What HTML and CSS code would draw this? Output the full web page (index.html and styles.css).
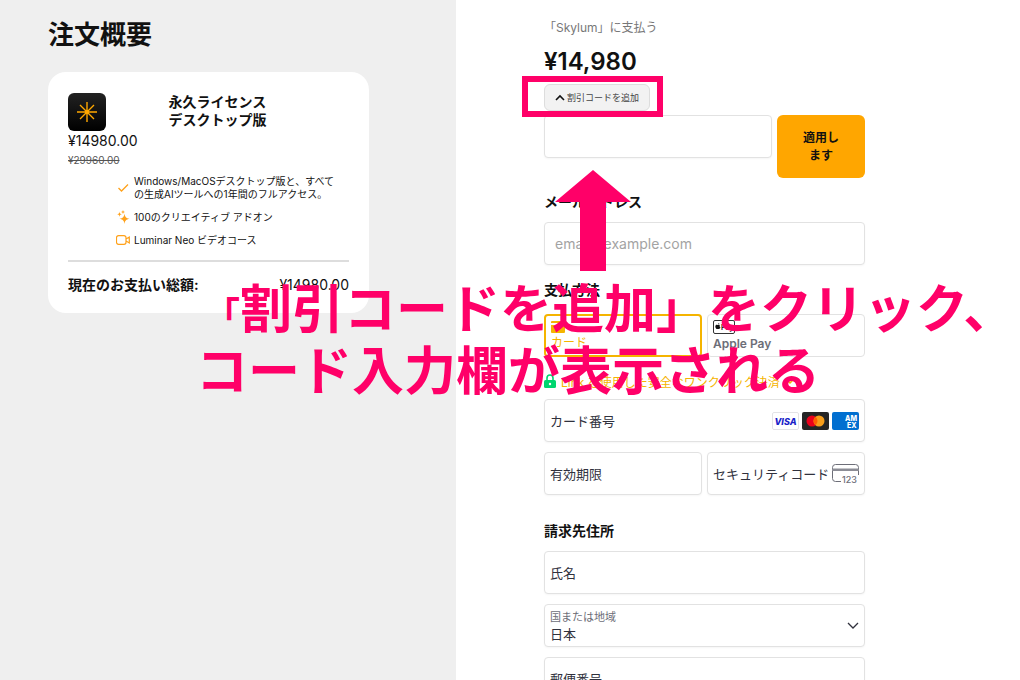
FILE: index.html
```html
<!DOCTYPE html>
<html lang="ja">
<head>
    <meta charset="UTF-8">
    <meta name="viewport" content="width=device-width, initial-scale=1.0">
    <title>Skylum - お支払い</title>
    <link rel="stylesheet" href="styles.css">
</head>
<body>
    <div class="checkout">
        <aside class="summary">
            <h1>注文概要</h1>
            <div class="summary-card">
                <div class="product">
                    <div class="product-price">
                        <svg class="product-logo" viewBox="0 0 38 38" aria-hidden="true">
                            <defs>
                                <linearGradient id="logo-bg" x1="0" y1="0" x2="0" y2="1">
                                    <stop offset="0" stop-color="#222"/>
                                    <stop offset="1" stop-color="#000"/>
                                </linearGradient>
                            </defs>
                            <rect width="38" height="38" rx="6" fill="url(#logo-bg)"/>
                            <path d="M19 9v20M9 19h20M12 12l14 14M26 12L12 26" stroke="#ffa800" stroke-width="1.4"/>
                            <circle cx="19" cy="19" r="2" fill="#ffa800"/>
                        </svg>
                        <span class="price">¥14980.00</span>
                        <s class="old-price">¥29960.00</s>
                    </div>
                    <h2>永久ライセンス<br>デスクトップ版</h2>
                </div>
                <ul class="features">
                    <li>
                        <svg viewBox="0 0 14 14" aria-hidden="true"><path d="M2.500 7l3 3 6.500-6.500" fill="none" stroke="#ffa11a" stroke-width="1.300"/></svg>
                        <span>Windows/MacOSデスクトップ版と、すべて<br>の生成AIツールへの1年間のフルアクセス。</span>
                    </li>
                    <li>
                        <svg viewBox="0 0 14 14" aria-hidden="true">
                            <path d="M8.500 3.500C9 7 10 8 13.500 8.800C10 9.600 9 10.600 8.500 14C8 10.600 7 9.600 3.500 8.800C7 8 8 7 8.500 3.500z" fill="#ffa11a"/>
                            <path d="M3.500 1.500C3.700 3.500 4.200 4 6 4.300C4.200 4.600 3.700 5.100 3.500 7C3.300 5.100 2.800 4.600 1 4.300C2.800 4 3.300 3.500 3.500 1.500zM7 0l.6 1.400L9 2l-1.400.6L7 4l-.6-1.400L5 2l1.400-.6z" fill="#ffa11a"/>
                        </svg>
                        <span>100のクリエイティブ アドオン</span>
                    </li>
                    <li>
                        <svg viewBox="0 0 14 14" aria-hidden="true"><path d="M2.500 2.700h5.500a2 2 0 0 1 2 2v4.600a2 2 0 0 1-2 2H2.500a2 2 0 0 1-2-2V4.700a2 2 0 0 1 2-2zM10 6l3.300-2v6L10 8z" fill="none" stroke="#ffa11a" stroke-width="1.200"/></svg>
                        <span>Luminar Neo ビデオコース</span>
                    </li>
                </ul>
                <div class="total">
                    <strong>現在のお支払い総額:</strong>
                    <span>¥14980.00</span>
                </div>
            </div>
        </aside>

        <main class="payment">
            <p class="merchant">「Skylum」に支払う</p>
            <p class="amount">¥14,980</p>
            <button type="button" class="promo-toggle">
                <svg viewBox="0 0 10 8" aria-hidden="true"><path d="M1 6l4-4 4 4" fill="none" stroke="#111" stroke-width="1.600"/></svg>
                割引コードを追加
            </button>

            <form class="payment-form">
                <div class="promo">
                    <input type="text" class="box" name="promo" aria-label="割引コード">
                    <button type="button" class="apply">適用し<br>ます</button>
                </div>

                <label class="section-title email-title" for="email">メールアドレス</label>
                <input type="email" class="box" id="email" name="email" placeholder="email@example.com">

                <h3 class="section-title method-title">支払方法</h3>
                <div class="two-columns methods">
                    <button type="button" class="method selected">
                        <svg viewBox="0 0 14 12" aria-hidden="true"><path d="M1 0h12a1 1 0 0 1 1 1v1H0V1a1 1 0 0 1 1-1zM0 4h14v7a1 1 0 0 1-1 1H1a1 1 0 0 1-1-1z" fill="#f5b400"/></svg>
                        カード
                    </button>
                    <button type="button" class="method">
                        <svg class="apple-pay" viewBox="0 0 22 14" aria-hidden="true">
                            <rect x=".5" y=".5" width="21" height="13" rx="1.500" fill="#fff" stroke="#333"/>
                            <path d="M5.500 5c.6 0 1-.4 1.700-.2-.9.700-.8 2 .2 2.500-.4 1.100-1 1.800-1.500 1.800-.5 0-.7-.2-1.100-.2s-.6.2-1 .2C3 9.100 2.300 7.500 2.300 6.600c0-1.300.8-1.900 1.600-1.900.7 0 1 .3 1.600.3zM5 4.500c0-.8.600-1.400 1.300-1.500 0 .8-.6 1.500-1.300 1.500z" fill="#111"/>
                            <text x="8" y="9.500" class="pay-text">Pay</text>
                        </svg>
                        Apple Pay
                    </button>
                </div>

                <a href="#" class="link-pay">
                    <svg viewBox="0 0 12 14" aria-hidden="true"><path d="M3 6V4a3 3 0 0 1 6 0v2" fill="none" stroke="#00d66f" stroke-width="1.600"/><rect y="6" width="12" height="8" rx="1.500" fill="#00d66f"/><circle cx="6" cy="10" r="1.200" fill="#fff"/></svg>
                    <span>Link を使用した安全なワンクリック決済</span>
                    <svg class="link-arrow" viewBox="0 0 10 8" aria-hidden="true"><path d="M1 2l4 4 4-4" fill="none" stroke="#f5b400" stroke-width="1.500"/></svg>
                </a>

                <div class="box field">
                    <label for="card-number">カード番号</label>
                    <input type="text" id="card-number" name="card-number">
                    <span class="brands">
                        <svg viewBox="0 0 27 18" role="img" aria-label="Visa"><rect x=".5" y=".5" width="26" height="17" rx="1.500" fill="#fff" stroke="#e3e3e6"/><text x="13.500" y="12.500" class="visa-text">VISA</text></svg>
                        <svg viewBox="0 0 27 18" role="img" aria-label="Mastercard"><rect width="27" height="18" rx="2" fill="#252525"/><circle cx="10" cy="9" r="5.500" fill="#eb001b"/><circle cx="17" cy="9" r="5.500" fill="#f79e1b"/><path d="M13.500 4.760a5.500 5.500 0 0 1 0 8.480a5.500 5.500 0 0 1 0-8.480z" fill="#ff5f00"/></svg>
                        <svg viewBox="0 0 27 18" role="img" aria-label="American Express"><rect width="27" height="18" rx="2" fill="#016fd0"/><text x="13" y="9" class="amex-text">AM</text><text x="15" y="15.500" class="amex-text">EX</text></svg>
                    </span>
                </div>

                <div class="two-columns">
                    <div class="box field">
                        <label for="expiry">有効期限</label>
                        <input type="text" id="expiry" name="expiry">
                    </div>
                    <div class="box field">
                        <label for="cvc">セキュリティコード</label>
                        <input type="text" id="cvc" name="cvc">
                        <svg class="cvc-icon" viewBox="0 0 27 20" aria-hidden="true"><path d="M9 17.500H3.500a3 3 0 0 1-3-3v-11a3 3 0 0 1 3-3h20a3 3 0 0 1 3 3V11" fill="none" stroke="#6d6e78"/><path d="M0 4.500h27v2.500H0z" fill="#8b8c95"/><text x="10" y="19" class="cvc-text">123</text></svg>
                    </div>
                </div>

                <h3 class="section-title billing-title">請求先住所</h3>
                <div class="box field">
                    <label for="name">氏名</label>
                    <input type="text" id="name" name="name">
                </div>
                <div class="box field country">
                    <div class="country-select">
                        <label for="country">国または地域</label>
                        <select id="country" name="country">
                            <option>日本</option>
                        </select>
                    </div>
                    <svg viewBox="0 0 12 8" aria-hidden="true"><path d="M1 1l5 5 5-5" fill="none" stroke="#30313d" stroke-width="1.300"/></svg>
                </div>
                <div class="box field">
                    <label for="zip">郵便番号</label>
                    <input type="text" id="zip" name="zip">
                </div>
            </form>
        </main>

        <!-- tutorial annotations on top of the checkout -->
        <div class="highlight"></div>
        <svg class="arrow" viewBox="0 0 76 101" aria-hidden="true"><path d="M38 0l38 32H51v69H25V32H0z" fill="#ff0068"/></svg>
        <p class="caption"><span class="caption-first"><span class="bracket">「</span>割引コードを追加」をクリック、</span><span>コード入力欄が表示される</span></p>
    </div>
</body>
</html>
```

FILE: styles.css
```css
* {
    box-sizing: border-box;
}
body {
    margin: 0;
    font-family: Inter, "Noto Sans CJK JP", sans-serif;
    font-size: 14px;
    color: #111;
    background-color: #fff;
}
h1, h2, h3, p, ul {
    margin: 0;
    padding: 0;
}
button, input, select {
    font-family: inherit;
    color: inherit;
}
svg {
    display: block;
    flex-shrink: 0;
}
.checkout {
    position: relative;
    display: grid;
    grid-template-columns: minmax(0, 456fr) minmax(0, 564fr);
    height: 100vh;
    overflow: hidden;
}

/* order summary */
.summary {
    background-color: #efefef;
    padding: 16px 87px 16px 48px;
}
.summary h1 {
    font-size: 26px;
    line-height: 38px;
    margin-bottom: 18px;
}
.summary-card {
    background-color: #fff;
    border-radius: 18px;
    padding: 21px 20px 18px;
}
.product {
    display: flex;
    gap: 31px;
}
.product-price {
    display: flex;
    flex-direction: column;
}
.product-logo {
    width: 38px;
    height: 38px;
}
.price {
    line-height: 20px;
}
.old-price {
    font-size: 10px;
    line-height: 18px;
    color: #555;
}
.product h2 {
    font-size: 14px;
    line-height: 18px;
}
.features {
    display: grid;
    gap: 9px;
    list-style: none;
    margin-top: 6px;
    padding-left: 48px;
    font-size: 10px;
    line-height: 13px;
}
.features li {
    display: flex;
    align-items: center;
    gap: 4px;
    white-space: nowrap;
}
.features svg {
    width: 14px;
    height: 14px;
}
.total {
    display: flex;
    justify-content: space-between;
    align-items: center;
    margin-top: 13px;
    padding-top: 13px;
    border-top: 2px solid #ddd;
    line-height: 20px;
}

/* payment form */
.payment {
    padding: 18px 155px 16px 88px;
}
.merchant {
    font-size: 12px;
    line-height: 20px;
    color: #777;
}
.amount {
    font-size: 24px;
    font-weight: 600;
    line-height: 32px;
    margin-top: 8px;
}
.promo-toggle {
    display: flex;
    align-items: center;
    gap: 2px;
    height: 27px;
    margin-top: 6px;
    padding: 0 10px;
    border: 1px solid #ddd;
    border-radius: 6px;
    background-color: #f2f2f2;
    color: #444;
    font-size: 9px;
}
.promo-toggle svg {
    width: 10px;
    height: 8px;
}
.payment-form {
    display: flex;
    flex-direction: column;
    gap: 10px;
    margin-top: 4px;
}
.box {
    width: 100%;
    height: 43px;
    border: 1px solid #e2e2e2;
    border-radius: 4px;
    background-color: #fff;
    box-shadow: 0 1px 2px rgba(0, 0, 0, 0.04);
}
.promo {
    display: grid;
    grid-template-columns: 228fr 88fr;
    gap: 5px;
}
.apply {
    height: 63px;
    border: none;
    border-radius: 6px;
    background-color: #ffa600;
    font-size: 12px;
    font-weight: bold;
    line-height: 18px;
}
#email {
    padding: 0 10px;
    font-size: 14px;
}
#email::placeholder {
    color: #a3a3a3;
}
.section-title {
    font-size: 14px;
    font-weight: bold;
    line-height: 20px;
}
.email-title {
    margin-top: 4px;
}
.method-title {
    margin: 5px 0 4px;
}
.billing-title {
    margin-top: 16px;
}
.two-columns {
    display: grid;
    grid-template-columns: 1fr 1fr;
    gap: 5px;
}
.method {
    display: flex;
    flex-direction: column;
    align-items: flex-start;
    justify-content: center;
    gap: 2px;
    height: 43px;
    padding: 0 5px;
    border: 1px solid #e2e2e2;
    border-radius: 4px;
    background-color: #fff;
    color: #6d6e78;
    font-size: 12px;
    font-weight: 600;
    line-height: 16px;
}
.method svg {
    width: 14px;
    height: 12px;
}
.method .apple-pay {
    width: 22px;
    height: 14px;
}
.method.selected {
    border: 2px solid #f5b400;
    color: #f5b400;
    font-weight: normal;
}
.pay-text {
    font-size: 7px;
    fill: #111;
}
.link-pay {
    display: flex;
    align-items: center;
    gap: 5px;
    height: 22px;
    padding-top: 6px;
    color: #f5b400;
    font-size: 12px;
    text-decoration: none;
    white-space: nowrap;
}
.link-pay svg {
    width: 12px;
    height: 14px;
}
.link-pay .link-arrow {
    width: 10px;
    height: 8px;
}
.field {
    display: flex;
    align-items: center;
    padding: 0 5px;
    color: #30313d;
    font-size: 13px;
}
.field label {
    white-space: nowrap;
}
.field input {
    flex: 1;
    min-width: 0;
    width: 0;
    border: none;
    outline: none;
    padding: 0;
    background: none;
    font-size: 13px;
}
.brands {
    display: flex;
    gap: 3px;
}
.brands svg {
    width: 27px;
    height: 18px;
}
.visa-text {
    font-size: 9px;
    font-style: italic;
    font-weight: 800;
    text-anchor: middle;
    fill: #1a1fc8;
}
.amex-text {
    font-size: 7px;
    font-weight: 800;
    fill: #fff;
}
.cvc-icon {
    width: 27px;
    height: 20px;
}
.cvc-text {
    font-size: 9px;
    font-weight: 500;
    fill: #6d6e78;
}
.country {
    justify-content: space-between;
}
.country-select {
    display: flex;
    flex: 1;
    flex-direction: column;
}
.country-select label {
    color: #6d6e78;
    font-size: 11px;
    line-height: 16px;
}
.country-select select {
    appearance: none;
    border: none;
    outline: none;
    padding: 0;
    background: none;
    font-size: 13px;
    line-height: 18px;
}
.country svg {
    width: 12px;
    height: 8px;
}

/* annotations */
.highlight {
    position: absolute;
    left: 522px;
    top: 76px;
    width: 141px;
    height: 41px;
    border: 6px solid #ff0068;
}
.arrow {
    position: absolute;
    left: 555px;
    top: 170px;
    width: 76px;
    height: 101px;
}
.caption {
    position: absolute;
    left: 196px;
    top: 275px;
    display: flex;
    flex-direction: column;
    color: #ff0068;
    font-family: "Noto Sans CJK JP", sans-serif;
    font-size: 52px;
    font-weight: bold;
    line-height: 62px;
    white-space: nowrap;
}
.caption-first {
    margin-left: 8px;
}
.bracket {
    font-size: 36px;
    line-height: 36px;
}
```
